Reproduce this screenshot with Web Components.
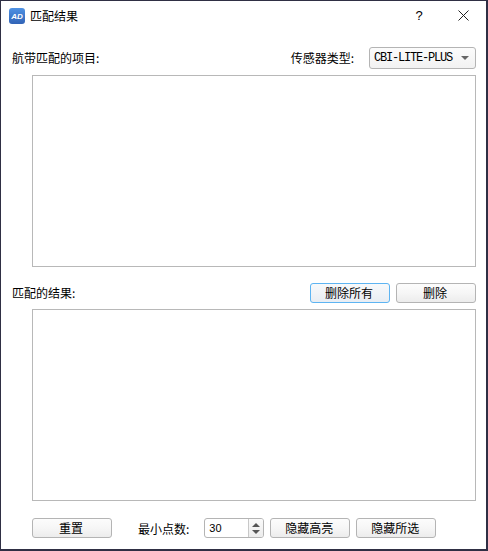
<!DOCTYPE html>
<html>
<head>
<meta charset="utf-8">
<title>匹配结果</title>
<style>
	html, body { margin: 0; padding: 0; background: #fff; }
	body { font: 12px "Noto Sans CJK SC", "Liberation Sans", sans-serif; color: #000; }
</style>
</head>
<body>
<match-dialog></match-dialog>
<script>
class PushButton extends HTMLElement {
	constructor(){
		super();
		this.attachShadow({mode:"open"});
		this.shadowRoot.innerHTML = /*html*/`
			<style>
				:host {
					display: flex;
					align-items: center;
					justify-content: center;
					box-sizing: border-box;
					width: 80px;
					height: 20px;
					padding-right: 2px;
					border: 1px solid #b4b4b4;
					border-radius: 3px;
					background: linear-gradient(#fcfcfc, #f6f6f6 50%, #ececec);
					font-size: 12px;
					line-height: 18px;
				}
				:host([focused]) {
					border-color: #5db4f2;
					background: linear-gradient(#f7f9fb, #f0f3f7 50%, #e8edf3);
				}
			</style>
			<slot></slot>
		`;
	}
}
customElements.define("push-button",PushButton);

class ComboBox extends HTMLElement {
	constructor(){
		super();
		this.attachShadow({mode:"open"});
		this.shadowRoot.innerHTML = /*html*/`
			<style>
				:host {
					display: flex;
					align-items: center;
					box-sizing: border-box;
					width: 107px;
					height: 22px;
					padding: 0 6px 0 4px;
					border: 1px solid #b4b4b4;
					border-radius: 3px;
					background: linear-gradient(#fcfcfc, #f2f2f2);
					font: 12px "Liberation Mono", monospace;
					letter-spacing: -1.2px;
				}
				span { flex: 1; white-space: nowrap; }
				i {
					width: 0;
					height: 0;
					border: 4px solid transparent;
					border-top: 4px solid #666;
					border-bottom: 0;
				}
			</style>
			<span><slot></slot></span><i></i>
		`;
	}
}
customElements.define("combo-box",ComboBox);

class SpinBox extends HTMLElement {
	constructor(){
		super();
		this.attachShadow({mode:"open"});
		this.shadowRoot.innerHTML = /*html*/`
			<style>
				:host {
					display: flex;
					box-sizing: border-box;
					width: 60px;
					height: 20px;
					border: 1px solid #b4b4b4;
					border-radius: 3px;
					background: #fff;
					font: 11px "Liberation Sans", sans-serif;
				}
				.value { flex: 1; padding-left: 4px; line-height: 18px; }
				.arrows {
					display: flex;
					flex-direction: column;
					align-items: center;
					justify-content: center;
					gap: 3px;
					width: 14px;
					border-left: 1px solid #c8c8c8;
					border-radius: 0 2px 2px 0;
					background: linear-gradient(#fafafa, #ececec);
				}
				.up, .down { width: 0; height: 0; border: 4px solid transparent; }
				.up { border-bottom: 4px solid #555; border-top: 0; }
				.down { border-top: 4px solid #555; border-bottom: 0; }
			</style>
			<div class="value"><slot></slot></div>
			<div class="arrows"><div class="up"></div><div class="down"></div></div>
		`;
	}
}
customElements.define("spin-box",SpinBox);

class TitleBar extends HTMLElement {
	constructor(){
		super();
		this.attachShadow({mode:"open"});
		this.shadowRoot.innerHTML = /*html*/`
			<style>
				:host {
					display: flex;
					align-items: center;
					height: 30px;
					padding-left: 8px;
					font-size: 12px;
				}
				.title { flex: 1; margin-left: 5px; padding-bottom: 2px; }
				.help { width: 20px; text-align: center; margin-right: 29px; padding-bottom: 2px; font: 13px "Liberation Sans", sans-serif; }
				svg { display: block; }
				.logo { margin-bottom: 1px; }
				.logo text { font: italic bold 8px "Liberation Sans", sans-serif; fill: #fff; }
				.close { margin: 0 17px 1px 0; }
			</style>
			<svg class="logo" width="16" height="16" viewBox="0 0 16 16">
				<defs>
					<linearGradient id="logo-fill" x1="0" y1="0" x2="0" y2="1">
						<stop offset="0" stop-color="#4f92e4"/>
						<stop offset="1" stop-color="#3163b6"/>
					</linearGradient>
				</defs>
				<rect width="16" height="16" rx="3" fill="url(#logo-fill)"/>
				<text x="8" y="11" text-anchor="middle">AD</text>
			</svg>
			<div class="title"><slot></slot></div>
			<div class="help">?</div>
			<svg class="close" width="11" height="11" viewBox="0 0 11 11">
				<path d="M.5.500 10.500 10.500M10.500.500.500 10.500" stroke="#222" fill="none"/>
			</svg>
		`;
	}
}
customElements.define("title-bar",TitleBar);

class MatchDialog extends HTMLElement {
	constructor(){
		super();
		this.attachShadow({mode:"open"});
		this.shadowRoot.innerHTML = /*html*/`
			<style>
				:host {
					display: flex;
					flex-direction: column;
					box-sizing: border-box;
					width: 488px;
					height: 551px;
					border: 1px solid #2f2f44;
					border-right-width: 2px;
					border-bottom-width: 2px;
					background: #fff;
				}
				.content {
					display: flex;
					flex-direction: column;
					padding: 16px 10px 0 11px;
				}
				.row { display: flex; align-items: center; justify-content: space-between; }
				.row .right { display: flex; align-items: center; gap: 6px; }
				.row > span, .right > span { padding-bottom: 2px; }
				.list {
					box-sizing: border-box;
					height: 192px;
					margin-left: 20px;
					border: 1px solid #b8b8b8;
				}
				.one { height: 22px; margin-bottom: 6px; }
				.two { height: 20px; margin: 16px 0 6px; }
				.bottom {
					display: flex;
					align-items: center;
					height: 20px;
					margin: 17px 0 0 20px;
				}
				.count { margin: 0 15px 0 26px; }
				spin-box { margin-right: 6px; }
				.bottom spin-box + push-button + push-button { margin-left: 6px; }
			</style>
			<title-bar>匹配结果</title-bar>
			<div class="content">
				<div class="row one">
					<span>航带匹配的项目:</span>
					<div class="right"><span style="margin-right:9px">传感器类型:</span><combo-box>CBI-LITE-PLUS</combo-box></div>
				</div>
				<div class="list"></div>
				<div class="row two">
					<span>匹配的结果:</span>
					<div class="right"><push-button focused>删除所有</push-button><push-button>删除</push-button></div>
				</div>
				<div class="list"></div>
				<div class="bottom">
					<push-button>重置</push-button>
					<span class="count">最小点数:</span>
					<spin-box>30</spin-box>
					<push-button>隐藏高亮</push-button>
					<push-button>隐藏所选</push-button>
				</div>
			</div>
		`;
	}
}
customElements.define("match-dialog",MatchDialog);
</script>
</body>
</html>
